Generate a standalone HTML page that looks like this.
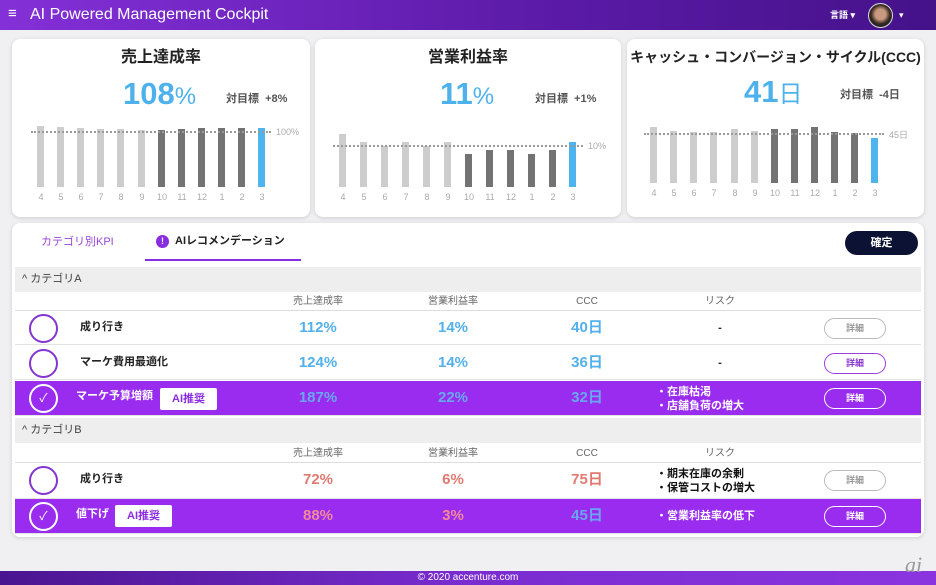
<!DOCTYPE html>
<html><head><meta charset="utf-8"><style>
*{margin:0;padding:0;box-sizing:border-box}
body{width:936px;height:585px;overflow:hidden;background:#f0f0f3;font-family:"Liberation Sans","Noto Sans CJK JP",sans-serif;position:relative;color:#222}
.a{position:absolute}
.hdr{left:0;top:0;width:936px;height:30px;background:linear-gradient(90deg,#8430d8,#5a1aa6 60%,#45128a)}
.card{background:#fff;border-radius:8px;box-shadow:0 1px 4px rgba(0,0,0,.15)}
.t{font-weight:bold;font-size:16px;text-align:center;width:100%;top:9px;line-height:20px}
.big{color:#4db2ec;font-size:31px;font-weight:bold;line-height:36px;white-space:nowrap}
.big small{font-size:24px;font-weight:normal}
.tg{font-size:11px;color:#555;font-weight:bold;line-height:14px;white-space:nowrap}
.b{position:absolute;width:7px;background:#cdcdcd}
.d{background:#737373}.bl{background:#4fb3ee}
.dl{position:absolute;height:0;border-top:2px dotted #999}
.lb{position:absolute;font-size:9px;color:#aaa;width:14px;text-align:center}
.row{left:15px;width:906px;height:34px;border-bottom:1px solid #e3e3e3}
.p{background:#9a2cf0;color:#fff}
.cat{left:15px;width:906px;height:25px;background:#eeeeee;font-size:11px;line-height:25px;padding-left:7px;color:#444}
.hd{left:15px;width:906px;height:19px;border-bottom:1px solid #ddd;font-size:10px;color:#666}
.c{position:absolute;width:29px;height:29px;border:2.5px solid #8436d2;border-radius:50%;left:14px;top:3px}
.p .c{border-color:#fff;color:#fff;font-size:12px;text-align:center;line-height:24px;border-width:2px}
.nm{position:absolute;left:65px;font-size:11px;font-weight:bold;top:9px;line-height:14px;white-space:nowrap}
.v{position:absolute;font-size:15px;font-weight:bold;width:80px;text-align:center;top:8px;margin-left:-40px;line-height:18px;white-space:nowrap}
.bu{color:#52b0ea}.re{color:#e07a70}
.p .bu{color:#68a8f2}.p .re{color:#f08a9a}
.btn{position:absolute;left:809px;top:7px;width:62px;height:21px;border:1.5px solid #bbb;border-radius:11px;font-size:9px;color:#999;text-align:center;line-height:18px;font-weight:bold}
.btn.pu{border-color:#9a3ee0;color:#8a3ad0}
.p .btn{border-color:#fff;color:#fff}
.ai{position:absolute;background:#fff;color:#8a2ce0;font-size:11px;font-weight:bold;border-radius:2px;height:22px;line-height:22px;padding:0 12px}
.rk{position:absolute;left:641px;font-size:11px;font-weight:bold;line-height:14px;white-space:nowrap}
.hc{position:absolute;width:100px;margin-left:-50px;text-align:center;top:3px;line-height:13px}
</style></head><body>
<div class="a hdr"></div>
<div class="a" style="left:8px;top:5px;color:#fff;font-size:15px;line-height:18px">≡</div>
<div class="a" style="left:30px;top:5px;color:#fff;font-size:16px;line-height:20px">AI Powered Management Cockpit</div>
<div class="a" style="left:830px;top:10px;color:#fff;font-size:9px;font-weight:bold;line-height:11px">言語 ▾</div>
<div class="a" style="left:868px;top:3px;width:25px;height:25px;border-radius:50%;background:radial-gradient(circle at 50% 45%,#c99a80 0 30%,#3a2a25 55%,#222 70%);border:1.5px solid #ddd"></div>
<div class="a" style="left:899px;top:10px;color:#fff;font-size:9px;line-height:11px">▾</div>

<div class="a card" style="left:12px;top:39px;width:298px;height:178px">
<div class="a t">売上達成率</div>
<div class="a big" style="left:111px;top:37px">108<small>%</small></div>
<div class="a tg" style="left:214px;top:53px">対目標 &nbsp;+8%</div>
</div>
<div class="b" style="left:37px;top:126px;height:61px"></div>
<div class="b" style="left:57px;top:127px;height:60px"></div>
<div class="b" style="left:77px;top:128px;height:59px"></div>
<div class="b" style="left:97px;top:129px;height:58px"></div>
<div class="b" style="left:117px;top:129px;height:58px"></div>
<div class="b" style="left:138px;top:130px;height:57px"></div>
<div class="b d" style="left:158px;top:130px;height:57px"></div>
<div class="b d" style="left:178px;top:129px;height:58px"></div>
<div class="b d" style="left:198px;top:128px;height:59px"></div>
<div class="b d" style="left:218px;top:128px;height:59px"></div>
<div class="b d" style="left:238px;top:128px;height:59px"></div>
<div class="b bl" style="left:258px;top:128px;height:59px"></div>
<div class="dl" style="left:31px;top:131px;width:240px"></div>
<div class="a" style="left:276px;top:127px;font-size:9px;color:#aaa">100%</div>
<div class="lb" style="left:34px;top:192px">4</div><div class="lb" style="left:54px;top:192px">5</div><div class="lb" style="left:74px;top:192px">6</div><div class="lb" style="left:94px;top:192px">7</div><div class="lb" style="left:114px;top:192px">8</div><div class="lb" style="left:135px;top:192px">9</div><div class="lb" style="left:155px;top:192px">10</div><div class="lb" style="left:175px;top:192px">11</div><div class="lb" style="left:195px;top:192px">12</div><div class="lb" style="left:215px;top:192px">1</div><div class="lb" style="left:235px;top:192px">2</div><div class="lb" style="left:255px;top:192px">3</div>

<div class="a card" style="left:315px;top:39px;width:306px;height:178px">
<div class="a t">営業利益率</div>
<div class="a big" style="left:125px;top:37px">11<small>%</small></div>
<div class="a tg" style="left:220px;top:53px">対目標 &nbsp;+1%</div>
</div>
<div class="b" style="left:339px;top:134px;height:53px"></div>
<div class="b" style="left:360px;top:142px;height:45px"></div>
<div class="b" style="left:381px;top:146px;height:41px"></div>
<div class="b" style="left:402px;top:142px;height:45px"></div>
<div class="b" style="left:423px;top:146px;height:41px"></div>
<div class="b" style="left:444px;top:142px;height:45px"></div>
<div class="b d" style="left:465px;top:154px;height:33px"></div>
<div class="b d" style="left:486px;top:150px;height:37px"></div>
<div class="b d" style="left:507px;top:150px;height:37px"></div>
<div class="b d" style="left:528px;top:154px;height:33px"></div>
<div class="b d" style="left:549px;top:150px;height:37px"></div>
<div class="b bl" style="left:569px;top:142px;height:45px"></div>
<div class="dl" style="left:333px;top:145px;width:250px"></div>
<div class="a" style="left:588px;top:141px;font-size:9px;color:#aaa">10%</div>
<div class="lb" style="left:336px;top:192px">4</div><div class="lb" style="left:357px;top:192px">5</div><div class="lb" style="left:378px;top:192px">6</div><div class="lb" style="left:399px;top:192px">7</div><div class="lb" style="left:420px;top:192px">8</div><div class="lb" style="left:441px;top:192px">9</div><div class="lb" style="left:462px;top:192px">10</div><div class="lb" style="left:483px;top:192px">11</div><div class="lb" style="left:504px;top:192px">12</div><div class="lb" style="left:525px;top:192px">1</div><div class="lb" style="left:546px;top:192px">2</div><div class="lb" style="left:566px;top:192px">3</div>

<div class="a card" style="left:627px;top:39px;width:297px;height:178px">
<div class="a t" style="font-size:14px;top:8px">キャッシュ・コンバージョン・サイクル(CCC)</div>
<div class="a big" style="left:117px;top:35px">41<small>日</small></div>
<div class="a tg" style="left:213px;top:49px">対目標 &nbsp;-4日</div>
</div>
<div class="b" style="left:650px;top:127px;height:56px"></div>
<div class="b" style="left:670px;top:131px;height:52px"></div>
<div class="b" style="left:690px;top:132px;height:51px"></div>
<div class="b" style="left:710px;top:132px;height:51px"></div>
<div class="b" style="left:731px;top:129px;height:54px"></div>
<div class="b" style="left:751px;top:131px;height:52px"></div>
<div class="b d" style="left:771px;top:129px;height:54px"></div>
<div class="b d" style="left:791px;top:129px;height:54px"></div>
<div class="b d" style="left:811px;top:127px;height:56px"></div>
<div class="b d" style="left:831px;top:132px;height:51px"></div>
<div class="b d" style="left:851px;top:133px;height:50px"></div>
<div class="b bl" style="left:871px;top:138px;height:45px"></div>
<div class="dl" style="left:644px;top:133px;width:240px"></div>
<div class="a" style="left:889px;top:128px;font-size:9px;color:#aaa">45日</div>
<div class="lb" style="left:647px;top:188px">4</div><div class="lb" style="left:667px;top:188px">5</div><div class="lb" style="left:687px;top:188px">6</div><div class="lb" style="left:707px;top:188px">7</div><div class="lb" style="left:728px;top:188px">8</div><div class="lb" style="left:748px;top:188px">9</div><div class="lb" style="left:768px;top:188px">10</div><div class="lb" style="left:788px;top:188px">11</div><div class="lb" style="left:808px;top:188px">12</div><div class="lb" style="left:828px;top:188px">1</div><div class="lb" style="left:848px;top:188px">2</div><div class="lb" style="left:868px;top:188px">3</div>

<div class="a card" style="left:12px;top:223px;width:912px;height:314px"></div>
<div class="a" style="left:41px;top:235px;font-size:11px;color:#9a45d8;line-height:14px">カテゴリ別KPI</div>
<div class="a" style="left:156px;top:235px;width:13px;height:13px;border-radius:50%;background:#8a2ce0;color:#fff;font-size:9px;text-align:center;line-height:13px;font-weight:bold">!</div>
<div class="a" style="left:175px;top:234px;font-size:11px;font-weight:bold;line-height:14px">AIレコメンデーション</div>
<div class="a" style="left:145px;top:259px;width:156px;height:2px;background:#8a2ce0"></div>
<div class="a" style="left:845px;top:231px;width:73px;height:24px;border-radius:12px;background:#0c1233;color:#fff;font-size:11px;font-weight:bold;text-align:center;line-height:24px">確定</div>

<div class="a cat" style="top:267px">^ カテゴリA</div>
<div class="a hd" style="top:292px"><div class="hc" style="left:303px">売上達成率</div><div class="hc" style="left:438px">営業利益率</div><div class="hc" style="left:572px">CCC</div><div class="hc" style="left:705px">リスク</div></div>
<div class="a row" style="top:311px"><div class="c"></div><div class="nm">成り行き</div><div class="v bu" style="left:303px">112%</div><div class="v bu" style="left:438px">14%</div><div class="v bu" style="left:572px">40日</div><div class="v" style="left:705px;font-size:11px">-</div><div class="btn">詳細</div></div>
<div class="a row" style="top:346px"><div class="c"></div><div class="nm">マーケ費用最適化</div><div class="v bu" style="left:303px">124%</div><div class="v bu" style="left:438px">14%</div><div class="v bu" style="left:572px">36日</div><div class="v" style="left:705px;font-size:11px">-</div><div class="btn pu">詳細</div></div>
<div class="a row p" style="top:381px;height:35px"><div class="c">✓</div><div class="nm" style="left:61px;top:8px">マーケ予算増額</div><div class="ai" style="left:145px;top:7px">AI推奨</div><div class="v bu" style="left:303px">187%</div><div class="v bu" style="left:438px">22%</div><div class="v bu" style="left:572px">32日</div><div class="rk" style="top:4px">・在庫枯渇<br>・店舗負荷の増大</div><div class="btn">詳細</div></div>

<div class="a cat" style="top:418px">^ カテゴリB</div>
<div class="a hd" style="top:444px"><div class="hc" style="left:303px">売上達成率</div><div class="hc" style="left:438px">営業利益率</div><div class="hc" style="left:572px">CCC</div><div class="hc" style="left:705px">リスク</div></div>
<div class="a row" style="top:463px;height:36px"><div class="c"></div><div class="nm">成り行き</div><div class="v re" style="left:303px">72%</div><div class="v re" style="left:438px">6%</div><div class="v re" style="left:572px">75日</div><div class="rk" style="top:4px;color:#111">・期末在庫の余剰<br>・保管コストの増大</div><div class="btn">詳細</div></div>
<div class="a row p" style="top:499px;height:35px"><div class="c">✓</div><div class="nm" style="left:61px;top:8px">値下げ</div><div class="ai" style="left:100px;top:6px">AI推奨</div><div class="v re" style="left:303px">88%</div><div class="v re" style="left:438px">3%</div><div class="v bu" style="left:572px">45日</div><div class="rk" style="top:10px">・営業利益率の低下</div><div class="btn">詳細</div></div>

<div class="a" style="left:0;top:571px;width:936px;height:14px;background:linear-gradient(90deg,#4a1590,#7a2cd0 50%,#8a34e0);color:#fff;font-size:10px;text-align:center;line-height:14px">© 2020 accenture.com</div>
<div class="a" style="left:905px;top:553px;font-size:22px;font-style:italic;color:#999;font-family:'Liberation Serif',serif;line-height:24px">ai</div>
</body></html>
